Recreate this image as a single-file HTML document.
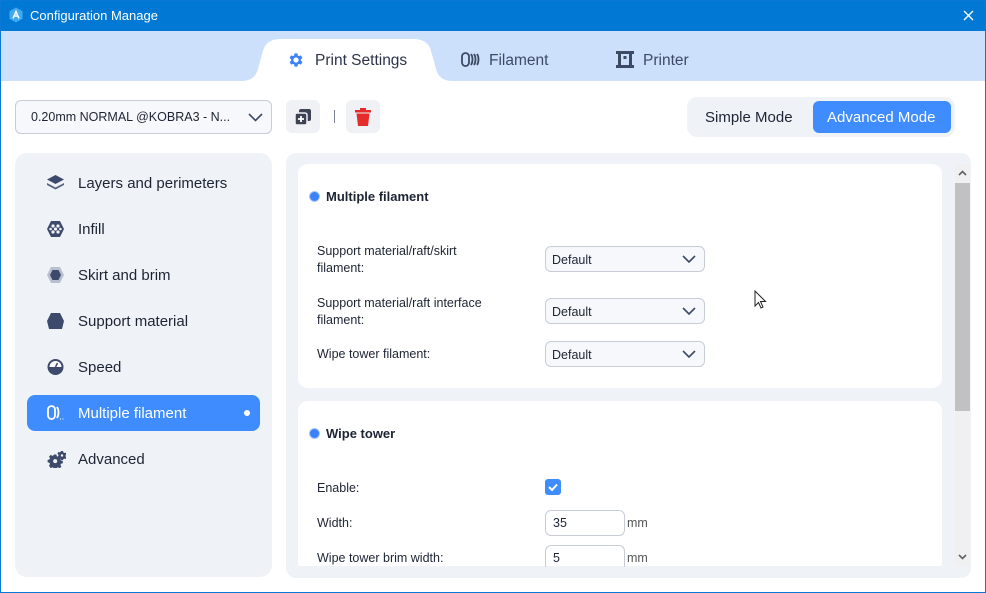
<!DOCTYPE html>
<html><head><meta charset="utf-8"><style>
*{box-sizing:border-box;margin:0;padding:0}
body{width:986px;height:593px;overflow:hidden;font-family:"Liberation Sans","DejaVu Sans",sans-serif;background:#fff;position:relative;color:#1d2433}
.abs{position:absolute}
.frame{left:0;top:0;width:986px;height:593px;border:1px solid #0b78d6;}
.title{left:0;top:0;width:986px;height:31px;background:#0078d4;color:#fff;font-size:13px}
.tabs{left:1px;top:31px;width:984px;height:50px;background:#cce0fb}
.tab{font-size:15.5px;color:#3d4a63}
.navi{left:15px;top:153px;width:257px;height:424px;background:#eff2f7;border-radius:12px}
.item{position:absolute;left:12px;width:233px;height:36px;font-size:15px;color:#1d2433;display:flex;align-items:center;padding-left:51px;border-radius:8px}
.item svg{position:absolute;left:20px;top:10px}
.panel{left:286px;top:153px;width:685px;height:425px;background:#eff2f7;border-radius:10px}
.card{background:#fff;border-radius:10px;position:absolute;left:12px;width:644px}
.lbl{position:absolute;left:19px;font-size:12.5px;line-height:17px;color:#1d2433}
.sel{position:absolute;left:247px;width:160px;height:26px;border:1px solid #c8ccd6;border-radius:6px;background:#f7f8fb;font-size:12.5px;padding:6px 0 0 6px}
.sel svg{position:absolute;right:8px;top:8px}
.inp{position:absolute;left:247px;width:80px;height:26px;border:1px solid #c8ccd6;border-radius:6px;font-size:12.5px;padding:5px 0 0 7px}
.h{position:absolute;left:12px;font-weight:bold;font-size:13px;display:flex;align-items:center}
.h i{display:inline-block;width:9px;height:9px;border-radius:50%;background:#3b82f6;margin-right:7px;box-shadow:0 0 0 1px #a9c8fb}
</style></head><body>
<div class="abs title">
 <svg class="abs" style="left:8px;top:7px" width="16" height="16" viewBox="0 0 16 16"><path d="M8 0.5L14.5 4.2V11.8L8 15.5L1.5 11.8V4.2Z" fill="#41a9f0"/><path d="M5 11.5L8 4.5L11 11.5M6.3 9H9.7" stroke="#fff" stroke-width="1.5" fill="none"/></svg>
 <span class="abs" style="left:30px;top:8px">Configuration Manage</span>
 <svg class="abs" style="left:963px;top:10px" width="11" height="11" viewBox="0 0 11 11"><path d="M1 1l9 9M10 1l-9 9" stroke="#fff" stroke-width="1.4"/></svg>
</div>
<div class="abs tabs">
 <svg class="abs" style="left:240px;top:8px" width="212" height="42" viewBox="0 0 212 42"><path d="M0 42C12 42 16 36 18 26L22 12C24 4 30 0 40 0H172C182 0 188 4 190 12L194 26C196 36 200 42 212 42Z" fill="#fff"/></svg>
 <svg class="abs" style="left:286px;top:20px" width="18" height="18" viewBox="0 0 24 24"><path fill="#3b82f6" d="M19.4 13a7.6 7.6 0 000-2l2.1-1.6-2-3.5-2.5 1a7.4 7.4 0 00-1.7-1L15 3.2h-4l-.4 2.7a7.4 7.4 0 00-1.7 1l-2.5-1-2 3.5L6.6 11a7.6 7.6 0 000 2l-2.1 1.6 2 3.5 2.5-1c.5.4 1.1.8 1.7 1l.3 2.7h4l.4-2.7c.6-.2 1.2-.6 1.7-1l2.5 1 2-3.5zM13 15.5a3.5 3.5 0 110-7 3.5 3.5 0 010 7z" transform="translate(-1 0)"/></svg>
 <span class="abs tab" style="left:314px;top:21px;color:#2b3447">Print Settings</span>
 <svg class="abs" style="left:460px;top:21px" width="20" height="15" viewBox="0 0 20 15"><g fill="none" stroke="#3d4a63" stroke-width="1.8"><rect x="1" y="1" width="7" height="13" rx="3.5"/><path d="M10 2c2 3 2 8 0 11M13 2c2 3 2 8 0 11M16 2c2 3 2 8 0 11"/></g></svg>
 <span class="abs tab" style="left:488px;top:21px">Filament</span>
 <svg class="abs" style="left:615px;top:20px" width="18" height="17" viewBox="0 0 18 17"><path fill="#3d4a63" d="M0 0h18v3h-2v11h2v3H0v-3h2V3H0zM5 3v11h8V3z"/><rect x="7.5" y="5" width="3" height="3" fill="#3d4a63"/></svg>
 <span class="abs tab" style="left:642px;top:21px">Printer</span>
</div>
<div class="abs" style="left:15px;top:100px;width:257px;height:34px;border:1px solid #c8ccd6;border-radius:6px;background:#f7f8fb;font-size:12.5px;padding:9px 0 0 15px">0.20mm NORMAL @KOBRA3 - N...
 <svg class="abs" style="right:8px;top:12px" width="15" height="9" viewBox="0 0 15 9"><path d="M1 1l6.5 6.5L14 1" stroke="#3d4a63" stroke-width="1.6" fill="none"/></svg></div>
<div class="abs" style="left:286px;top:100px;width:34px;height:33px;background:#eff1f5;border-radius:6px">
 <svg class="abs" style="left:8px;top:8px" width="18" height="18" viewBox="0 0 18 18"><rect x="5" y="1" width="12" height="12" rx="2" fill="#3d4353"/><rect x="1" y="5" width="12" height="12" rx="2" fill="#3d4353" stroke="#eff1f5" stroke-width="1.5"/><path d="M7 8v6M4 11h6" stroke="#fff" stroke-width="1.8"/></svg></div>
<div class="abs" style="left:334px;top:110px;width:1px;height:13px;background:#7a8090"></div>
<div class="abs" style="left:346px;top:100px;width:34px;height:33px;background:#eff1f5;border-radius:6px">
 <svg class="abs" style="left:9px;top:8px" width="16" height="18" viewBox="0 0 16 18"><path fill="#e62b2b" d="M5 0h6v2h5v2.5H0V2h5zM1.5 5.5h13L13 18H3z"/></svg></div>
<div class="abs" style="left:687px;top:97px;width:268px;height:40px;background:#eff2f7;border-radius:10px">
 <span class="abs" style="left:18px;top:12px;font-size:15px">Simple Mode</span>
 <div class="abs" style="left:126px;top:4px;width:138px;height:32px;background:#3f8cff;border-radius:6px;color:#fff;font-size:15px;padding:8px 0 0 14px">Advanced Mode</div>
</div>
<div class="abs navi">
 <div class="item" style="top:12px"><svg width="17" height="16" viewBox="0 0 17 16"><path fill="#3d4a6b" d="M8.5 0L17 4.5 8.5 9 0 4.5z"/><path fill="#3d4a6b" d="M0 8l8.5 4.5L17 8v2l-8.5 4.5L0 10z" opacity=".85"/></svg>Layers and perimeters</div>
 <div class="item" style="top:58px"><svg width="17" height="16" viewBox="0 0 17 16"><path fill="#3d4a6b" d="M4 0h9l4 8-4 8H4L0 8z"/><g fill="#eff2f7"><circle cx="6" cy="5" r="1.6"/><circle cx="11" cy="5" r="1.6"/><circle cx="3.6" cy="8" r="1.3"/><circle cx="8.5" cy="8" r="1.6"/><circle cx="13.4" cy="8" r="1.3"/><circle cx="6" cy="11" r="1.6"/><circle cx="11" cy="11" r="1.6"/></g></svg>Infill</div>
 <div class="item" style="top:104px"><svg width="17" height="16" viewBox="0 0 17 16"><path fill="#b8c0d0" d="M4 0h9l4 8-4 8H4L0 8z"/><path fill="#3d4a6b" d="M5.5 3h6l2.5 5-2.5 5h-6L3 8z"/></svg>Skirt and brim</div>
 <div class="item" style="top:150px"><svg width="17" height="16" viewBox="0 0 17 16"><path fill="#3d4a6b" d="M4 0h9l4 8-2 8H2L0 8z"/></svg>Support material</div>
 <div class="item" style="top:196px"><svg width="17" height="16" viewBox="0 0 17 16"><circle cx="8.5" cy="8" r="8" fill="#3d4a6b"/><path d="M2.5 8a6 6 0 0112 0z" fill="#fff"/><path d="M8.5 8l2-4" stroke="#3d4a6b" stroke-width="1.5"/></svg>Speed</div>
 <div class="item" style="top:242px;background:#3f8cff;color:#fff"><svg width="18" height="16" viewBox="0 0 18 16"><g fill="none" stroke="#fff" stroke-width="1.8"><rect x="1" y="1" width="7" height="13" rx="3.5"/><path d="M10 2c2 3 2 8 0 11"/></g><path d="M13 14h1M15.5 14h1" stroke="#fff"/></svg>Multiple filament<span style="position:absolute;right:10px;top:15px;width:6px;height:6px;border-radius:50%;background:#fff"></span></div>
 <div class="item" style="top:288px"><svg width="19" height="17" viewBox="0 0 19 17"><path fill="#3d4a6b" d="M6 3.5h2.4l.4 1.8 1.3.6 1.6-1 1.7 1.7-1 1.6.6 1.3 1.8.4v2.4l-1.8.4-.6 1.3 1 1.6-1.7 1.7-1.6-1-1.3.6-.4 1.8H6l-.4-1.8-1.3-.6-1.6 1L1 14.6l1-1.6-.6-1.3L-.4 11.3V8.9l1.8-.4.6-1.3-1-1.6 1.7-1.7 1.6 1 1.3-.6z" transform="translate(1 0)"/><circle cx="8.2" cy="10.1" r="2" fill="#eff2f7"/><path fill="#3d4a6b" d="M14 0h2l.3 1.3 1.2.7 1.2-.4.9 1.6-1 .9v1.4l1 .9-.9 1.6-1.2-.4-1.2.7L16 9h-2l-.3-1.3-1.2-.7-1.2.4-.9-1.6 1-.9V3.5l-1-.9.9-1.6 1.2.4 1.2-.7z"/><circle cx="15" cy="4.5" r="1.2" fill="#eff2f7"/></svg>Advanced</div>
</div>
<div class="abs panel">
 <div class="card" style="top:11px;height:224px">
  <div class="h" style="top:25px"><i></i>Multiple filament</div>
  <div class="lbl" style="top:79px">Support material/raft/skirt<br>filament:</div>
  <div class="sel" style="top:82px">Default<svg width="14" height="8" viewBox="0 0 14 8"><path d="M1 1l6 6 6-6" stroke="#3d4a63" stroke-width="1.6" fill="none"/></svg></div>
  <div class="lbl" style="top:131px">Support material/raft interface<br>filament:</div>
  <div class="sel" style="top:134px">Default<svg width="14" height="8" viewBox="0 0 14 8"><path d="M1 1l6 6 6-6" stroke="#3d4a63" stroke-width="1.6" fill="none"/></svg></div>
  <div class="lbl" style="top:182px">Wipe tower filament:</div>
  <div class="sel" style="top:177px">Default<svg width="14" height="8" viewBox="0 0 14 8"><path d="M1 1l6 6 6-6" stroke="#3d4a63" stroke-width="1.6" fill="none"/></svg></div>
 </div>
 <div class="card" style="top:248px;height:165px;border-radius:10px 10px 0 0">
  <div class="h" style="top:25px"><i></i>Wipe tower</div>
  <div class="lbl" style="top:79px">Enable:</div>
  <div class="abs" style="left:247px;top:78px;width:16px;height:16px;background:#3f8cff;border-radius:3px"><svg width="16" height="16" viewBox="0 0 16 16"><path d="M4 8l3 3 5-5.5" stroke="#fff" stroke-width="2" fill="none"/></svg></div>
  <div class="lbl" style="top:114px">Width:</div>
  <div class="inp" style="top:109px">35</div><span class="abs" style="left:329px;top:115px;font-size:12.5px;color:#555">mm</span>
  <div class="lbl" style="top:149px">Wipe tower brim width:</div>
  <div class="inp" style="top:144px;height:22px;border-bottom:none;border-radius:6px 6px 0 0">5</div><span class="abs" style="left:329px;top:150px;font-size:12.5px;color:#555">mm</span>
 </div>
 <div class="abs" style="left:669px;top:11px;width:15px;height:402px;background:#f0f0f0">
  <div class="abs" style="left:0;top:19px;width:15px;height:228px;background:#c1c1c1"></div>
  <svg class="abs" style="left:3px;top:6px" width="9" height="6" viewBox="0 0 9 6"><path d="M1 5l3.5-3.5L8 5" stroke="#606060" stroke-width="1.6" fill="none"/></svg>
  <svg class="abs" style="left:3px;top:390px" width="9" height="6" viewBox="0 0 9 6"><path d="M1 1l3.5 3.5L8 1" stroke="#606060" stroke-width="1.6" fill="none"/></svg>
 </div>
</div>
<svg class="abs" style="left:754px;top:290px" width="13" height="20" viewBox="0 0 13 20"><path d="M1 1v15l3.5-3.5 2.5 5.5 2-1-2.5-5.5h5z" fill="#fff" stroke="#222"/></svg>
<div class="abs frame"></div>
</body></html>
